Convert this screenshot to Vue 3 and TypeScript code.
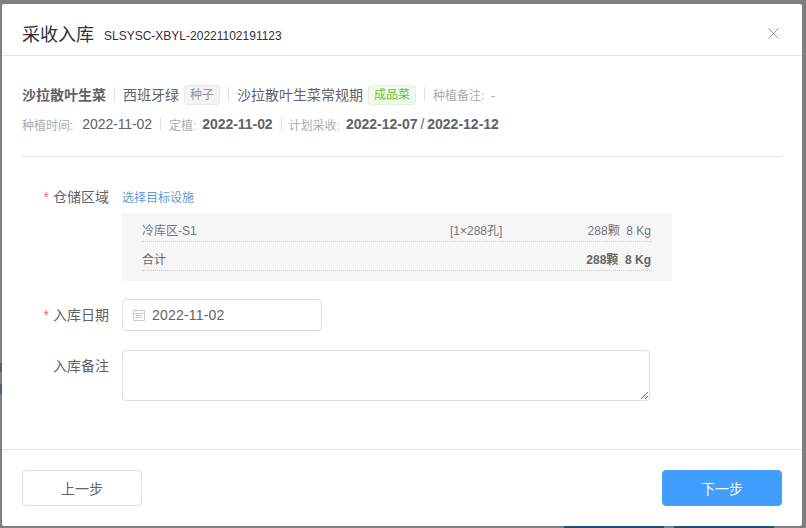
<script setup lang="ts">
interface StockRow { name: string; spec: string; qty: string; total?: boolean }
const rows: StockRow[] = [
  { name: '冷库区-S1', spec: '[1×288孔]', qty: '288颗  8 Kg' },
  { name: '合计', spec: '', qty: '288颗  8 Kg', total: true },
]
</script>

<template>
  <div class="overlay">
    <div class="ghost ghost-a"></div>
    <div class="ghost ghost-b"></div>
    <div class="ghost-left ghost-c"></div>
    <div class="ghost-left ghost-d"></div>
    <section class="dialog">
      <header class="head">
        <h1>采收入库</h1>
        <span class="code">SLSYSC-XBYL-20221102191123</span>
        <svg class="close" width="11" height="11" viewBox="0 0 11 11" aria-label="关闭">
          <path d="M.5.5l10 10M10.500.5l-10 10" fill="none" stroke="#909399" stroke-width="1" />
        </svg>
      </header>

      <main class="body">
        <div class="info line-one">
          <b>沙拉散叶生菜</b><i class="sep"></i>
          <span>西班牙绿</span><em class="tag grey">种子</em><i class="sep"></i>
          <span>沙拉散叶生菜常规期</span><em class="tag green">成品菜</em><i class="sep"></i>
          <span class="muted">种植备注:&nbsp; -</span>
        </div>
        <div class="info line-two">
          <span class="muted">种植时间:</span><span class="date plain">2022-11-02</span><i class="sep"></i>
          <span class="muted">定植:</span><b class="date planted">2022-11-02</b><i class="sep tight"></i>
          <span class="muted">计划采收:</span><b class="date planned">2022-12-07 <span class="slash">/</span> 2022-12-12</b>
        </div>
        <hr class="rule" />

        <div class="form-row first">
          <label class="req">仓储区域</label>
          <div class="control">
            <a class="link">选择目标设施</a>
            <div class="stock">
              <div v-for="row in rows" :key="row.name" class="stock-row" :class="{ total: row.total }">
                <span class="s-name">{{ row.name }}</span>
                <span class="s-spec">{{ row.spec }}</span>
                <span class="s-qty">{{ row.qty }}</span>
              </div>
            </div>
          </div>
        </div>

        <div class="form-row date-row">
          <label class="req">入库日期</label>
          <div class="date-input">
            <svg width="12" height="12" viewBox="0 0 12 12">
              <path d="M.5 1.500h11v10H.5zM.5 4.500h11M3 0v2.500M9 0v2.500M2.500 6.500h7M2.500 8.500h7" fill="none" stroke="#c8cbd2" stroke-width="1" />
            </svg>
            <span>2022-11-02</span>
          </div>
        </div>

        <div class="form-row note-row">
          <label>入库备注</label>
          <textarea class="note"></textarea>
        </div>
      </main>

      <footer class="foot">
        <button class="btn">上一步</button>
        <button class="btn primary">下一步</button>
      </footer>
    </section>
  </div>
</template>

<style>
html, body { margin: 0; background: #808080; }
</style>

<style scoped>
.overlay {
  position: relative;
  width: 806px;
  height: 528px;
  box-sizing: border-box;
  padding: 4px 4px 2px 2px;
  background: #7f7f7f;
  overflow: hidden;
  font-family: "Liberation Sans", "Noto Sans CJK SC", sans-serif;
  color: #606266;
}
.ghost { position: absolute; bottom: 0; height: 2px; width: 100px; background: #1f4e80; }
.ghost-a { left: 564px; }
.ghost-b { left: 674px; }
.ghost-left { position: absolute; left: 0; width: 2px; background: #4d6478; }
.ghost-c { top: 363px; height: 9px; }
.ghost-d { top: 384px; height: 10px; }
.dialog {
  position: relative;
  width: 800px;
  height: 522px;
  background: #fff;
  border-radius: 2px;
  display: flex;
  flex-direction: column;
}
.head {
  height: 52px;
  flex: none;
  box-sizing: border-box;
  border-bottom: 1px solid #e4e4e8;
  padding: 11px 23px 0 20px;
  display: flex;
  align-items: center;
}
.head h1 { margin: 0; font-size: 18px; font-weight: 400; color: #303133; line-height: 24px; }
.code { margin-left: 10px; font-size: 12px; color: #303133; position: relative; top: 1px; }
.close { margin-left: auto; margin-top: -4px; }
.body { flex: 1; padding: 0 20px; }
.info { display: flex; align-items: center; font-size: 14px; color: #606266; }
.info b { font-weight: 700; }
.line-one { margin-top: 27px; height: 22px; }
.line-two { margin-top: 8px; height: 22px; }
.sep { width: 1px; height: 14px; background: #dcdfe6; margin: 0 8px; flex: none; }
.sep.tight { margin-right: 7px; }
.muted { color: #a9abb2; font-size: 12px; }
.date { margin-left: 5px; font-size: 14px; color: #606266; }
.date.plain { margin-left: 9px; letter-spacing: -.1px; }
.date.planted { margin-left: 6px; letter-spacing: -.05px; }
.date.planned { margin-left: 6px; }
.slash { font-weight: 400; margin: 0 -1px; }
.tag {
  font-style: normal;
  font-size: 12px;
  line-height: 18px;
  height: 20px;
  box-sizing: border-box;
  padding: 0 5px;
  margin-left: 5px;
  border-radius: 3px;
  border: 1px solid;
  position: relative;
  top: 1px;
}
.tag.grey { background: #f4f4f5; border-color: #e9e9eb; color: #909399; }
.tag.green { background: #f0f9eb; border-color: #e1f3d8; color: #67c23a; }
.rule { margin: 21px 0 0; border: 0; border-top: 1px solid #e1e1e6; }
.form-row { display: flex; font-size: 14px; }
.form-row > label, .control { line-height: 18px; }
.form-row > label { width: 87px; flex: none; text-align: right; margin-right: 13px; color: #606266; }
.req::before { content: "*"; color: #f56c6c; margin-right: 4px; }
.first { margin-top: 31px; }
.control { flex: none; width: 550px; }
.link { display: block; color: #5b9bd5; font-size: 12px; height: 18px; position: relative; top: 1px; }
.stock { margin-top: 7px; background: #f6f6f6; height: 68px; box-sizing: border-box; padding: 0 20px; font-size: 12px; }
.stock-row {
  height: 29px;
  box-sizing: border-box;
  border-bottom: 1px dotted #c8c8c8;
  display: flex;
  align-items: center;
  padding-top: 7px;
  color: #73767b;
}
.stock-row.total { font-weight: 700; color: #666; }
.s-name { width: 308px; font-weight: 400; }
.s-spec { flex: 1; }
.s-qty { white-space: pre; padding-right: 1px; }
.date-row { margin-top: 18px; align-items: center; }
.date-input {
  width: 200px;
  height: 32px;
  box-sizing: border-box;
  border: 1px solid #dcdfe6;
  border-radius: 4px;
  display: flex;
  align-items: center;
  padding-left: 10px;
  font-size: 14px;
  color: #606266;
}
.date-input span { margin-left: 7px; letter-spacing: .2px; }
.note-row { margin-top: 19px; }
.note-row label { padding-top: 7px; }
.note {
  width: 528px;
  height: 51px;
  box-sizing: border-box;
  border: 1px solid #dcdfe6;
  border-radius: 4px;
  outline: none;
  margin: 0;
  display: block;
  background: #fff;
}
.foot {
  height: 77px;
  flex: none;
  box-sizing: border-box;
  border-top: 1px solid #e4e4e8;
  padding: 20px 20px 0;
  display: flex;
  justify-content: space-between;
}
.btn {
  width: 120px;
  height: 36px;
  box-sizing: border-box;
  border: 1px solid #dcdfe6;
  border-radius: 4px;
  background: #fff;
  color: #606266;
  font: 14px "Liberation Sans", "Noto Sans CJK SC", sans-serif;
  padding: 0;
}
.btn.primary { background: #409eff; border-color: #409eff; color: #fff; }
</style>
